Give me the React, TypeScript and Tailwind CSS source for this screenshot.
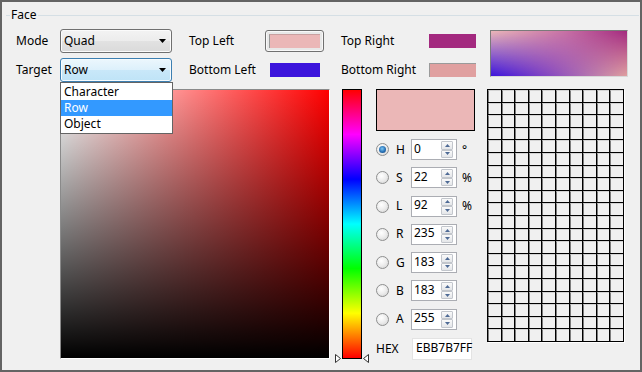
import React from "react";

function Caret() {
  return (
    <svg width="7" height="4" viewBox="0 0 7 4">
      <polygon points="0,0 7,0 3.5,4" fill="#000" />
    </svg>
  );
}

function Combo({ value, active = false }: { value: string; active?: boolean }) {
  return (
    <div
      className={
        active
          ? "flex h-[24px] w-[112px] items-center justify-between rounded-[3px] border border-[#3c7fb1] bg-[linear-gradient(to_bottom,#ecf7fd,#dcf0fb_50%,#c9e8f9_50%,#bfe3f7)] pl-[3px] pr-[5px] shadow-[inset_0_0_0_1px_#f6fbfe]"
          : "flex h-[24px] w-[112px] items-center justify-between rounded-[3px] border border-[#707070] bg-[linear-gradient(to_bottom,#f3f3f3,#ececec_50%,#e2e2e2_50%,#dadada)] pl-[3px] pr-[5px] shadow-[inset_0_0_0_1px_#fbfbfb]"
      }
    >
      <span>{value}</span>
      <Caret />
    </div>
  );
}

function Radio({ on = false }: { on?: boolean }) {
  return (
    <div className="flex h-[13px] w-[13px] shrink-0 items-center justify-center rounded-full border border-[#8e8f8f] bg-[radial-gradient(circle_at_40%_35%,#ffffff,#ececec_50%,#cfcfcf)]">
      {on && (
        <div className="h-[7px] w-[7px] rounded-full bg-[radial-gradient(circle_at_45%_40%,#7cc8f5,#2770b5_55%,#0f3d70)]" />
      )}
    </div>
  );
}

function SpinArrow({ up = false }: { up?: boolean }) {
  return (
    <div className="flex flex-1 items-center justify-center rounded-[1px] border border-[#c2c6cc] bg-[linear-gradient(to_bottom,#fafafa,#e4e6e9)]">
      <svg width="5" height="3" viewBox="0 0 5 3">
        <polygon points={up ? "0,3 5,3 2.5,0" : "0,0 5,0 2.5,3"} fill="#4e6a95" />
      </svg>
    </div>
  );
}

function Spin({ value }: { value: string }) {
  return (
    <div className="flex h-[21px] w-[46px] shrink-0 items-stretch border border-[#abadb3] bg-white">
      <span className="flex flex-1 items-center pb-[2px] pl-[2px]">{value}</span>
      <div className="my-[1px] mr-[3px] flex w-[12px] flex-col">
        <SpinArrow up />
        <SpinArrow />
      </div>
    </div>
  );
}

const channels = [
  { k: "H", v: "0", unit: "°", on: true },
  { k: "S", v: "22", unit: "%" },
  { k: "L", v: "92", unit: "%" },
  { k: "R", v: "235" },
  { k: "G", v: "183" },
  { k: "B", v: "183" },
  { k: "A", v: "255" },
];

export default function App() {
  return (
    <div className="h-[372px] w-[642px] border-2 border-[#646464] bg-[#f0f0f0] font-['Noto_Sans',sans-serif] text-[12px] leading-none text-black">
      <fieldset className="ml-[4px] mr-[1px] mt-[5px] h-[358px] border-0 border-t border-[#d5dfe5] p-0">
        <legend className="ml-[4px] px-[1px] leading-[16px]">Face</legend>

        <div className="pl-[10px] pt-[6px]">
          {/* top: mode/target + corner colours + preview */}
          <div className="flex items-start">
            <div className="flex w-[44px] flex-col gap-[5px]">
              <div className="flex h-[24px] items-center">Mode</div>
              <div className="flex h-[24px] items-center">Target</div>
            </div>

            <div className="flex w-[112px] flex-col gap-[5px]">
              <Combo value="Quad" />
              <div className="relative z-10">
                <Combo value="Row" active />
                <div className="absolute left-0 top-[24px] flex w-[113px] flex-col border border-[#646464] bg-white py-px">
                  <div className="flex h-[16px] items-center pl-[3px]">Character</div>
                  <div className="flex h-[16px] items-center bg-[#3399ff] pl-[3px] text-white">Row</div>
                  <div className="flex h-[16px] items-center pl-[3px]">Object</div>
                </div>
              </div>
            </div>

            <div className="ml-[17px] flex w-[76px] flex-col gap-[5px]">
              <div className="flex h-[24px] items-center">Top Left</div>
              <div className="flex h-[24px] items-center">Bottom Left</div>
            </div>

            <div className="flex w-[59px] flex-col gap-[5px]">
              <div className="flex h-[24px] items-center">
                <div className="flex h-[22px] w-[59px] items-center justify-center rounded-[3px] border border-[#707070] bg-[#e8e8e8] shadow-[inset_0_0_0_1px_#f8f8f8]">
                  <div className="h-[14px] w-[51px] border-l border-t border-l-[#9a9a9a] border-t-[#c9a0a0] bg-[#ebb7b7]" />
                </div>
              </div>
              <div className="flex h-[24px] items-center justify-center">
                <div className="h-[14px] w-[50px] bg-[#3c14dc]" />
              </div>
            </div>

            <div className="ml-[17px] flex w-[88px] flex-col gap-[5px]">
              <div className="flex h-[24px] items-center">Top Right</div>
              <div className="flex h-[24px] items-center">Bottom Right</div>
            </div>

            <div className="flex w-[47px] flex-col gap-[5px]">
              <div className="flex h-[24px] items-center">
                <div className="h-[14px] w-[47px] bg-[#a3297f]" />
              </div>
              <div className="flex h-[24px] items-center">
                <div className="h-[14px] w-[47px] border-l border-t border-[#9a9a9a] bg-[#e0a0a0]" />
              </div>
            </div>

            <div className="relative ml-[14px] mt-px h-[47px] w-[138px] overflow-hidden border-l border-t border-b border-r border-l-[#7a7a7a] border-t-[#7a7a7a] border-b-[#d8d8d8] border-r-[#d8d8d8] bg-[linear-gradient(to_right,#3c14dc,#8a4cc0_45%,#e0a0a0)]">
              <div className="h-full w-full bg-[linear-gradient(to_right,#ebb7b7,#c770a4_55%,#a3297f)] [mask-image:linear-gradient(to_bottom,black,transparent)]" />
            </div>
          </div>

          {/* picker */}
          <div className="ml-[44px] mt-[7px] flex items-start">
            <div className="h-[270px] w-[270px] border-l border-t border-b border-r border-l-[#8a8a8a] border-t-[#8a8a8a] border-b-white border-r-white bg-[linear-gradient(to_right,#ffffff,#ff0000)]">
              <div className="h-full w-full bg-[linear-gradient(to_bottom,transparent,#000000)]" />
            </div>

            <div className="relative ml-[3px] h-[274px] w-[38px]">
              <div className="mx-[9px] h-[270px] w-[20px] border border-black bg-[linear-gradient(to_bottom,#ff0000,#ff00ff_16.6%,#0000ff_33.3%,#00ffff_50%,#00ff00_66.6%,#ffff00_83.3%,#ff0000)]" />
              <svg className="absolute left-[2px] top-[265px]" width="6" height="9" viewBox="0 0 6 9">
                <polygon points="0.5,0.5 5.5,4.5 0.5,8.5" fill="#fff" stroke="#333" />
              </svg>
              <svg className="absolute right-[2px] top-[265px]" width="6" height="9" viewBox="0 0 6 9">
                <polygon points="5.5,0.5 0.5,4.5 5.5,8.5" fill="#fff" stroke="#333" />
              </svg>
            </div>

            <div className="ml-[5px] flex w-[99px] flex-col">
              <div className="h-[42px] w-[99px] border border-black bg-[#ebb7b7]" />
              <div className="mt-[8px] flex flex-col gap-[7.3px]">
                {channels.map((c) => (
                  <div key={c.k} className="flex h-[21px] items-center">
                    <Radio on={c.on} />
                    <span className="ml-[7px] w-[15px]">{c.k}</span>
                    <Spin value={c.v} />
                    {c.unit && <span className="ml-[5px]">{c.unit}</span>}
                  </div>
                ))}
              </div>
              <div className="mt-[8px] flex h-[22px] items-center">
                <span className="w-[36px]">HEX</span>
                <div className="flex h-[22px] w-[60px] items-center border border-[#e3e3e3] bg-white pb-[2px] pl-[3px]">
                  EBB7B7FF
                </div>
              </div>
            </div>

            <div className="ml-[12px] grid h-[253px] w-[137px] grid-cols-10 grid-rows-20 gap-px bg-black p-px shadow-[1px_1px_0_#ffffff]">
              {Array.from({ length: 200 }).map((_, i) => (
                <div key={i} className="border-l border-t border-l-[#7c7c7c] border-t-[#d4d4d4] bg-[#f0f0f0]" />
              ))}
            </div>
          </div>
        </div>
      </fieldset>
    </div>
  );
}
